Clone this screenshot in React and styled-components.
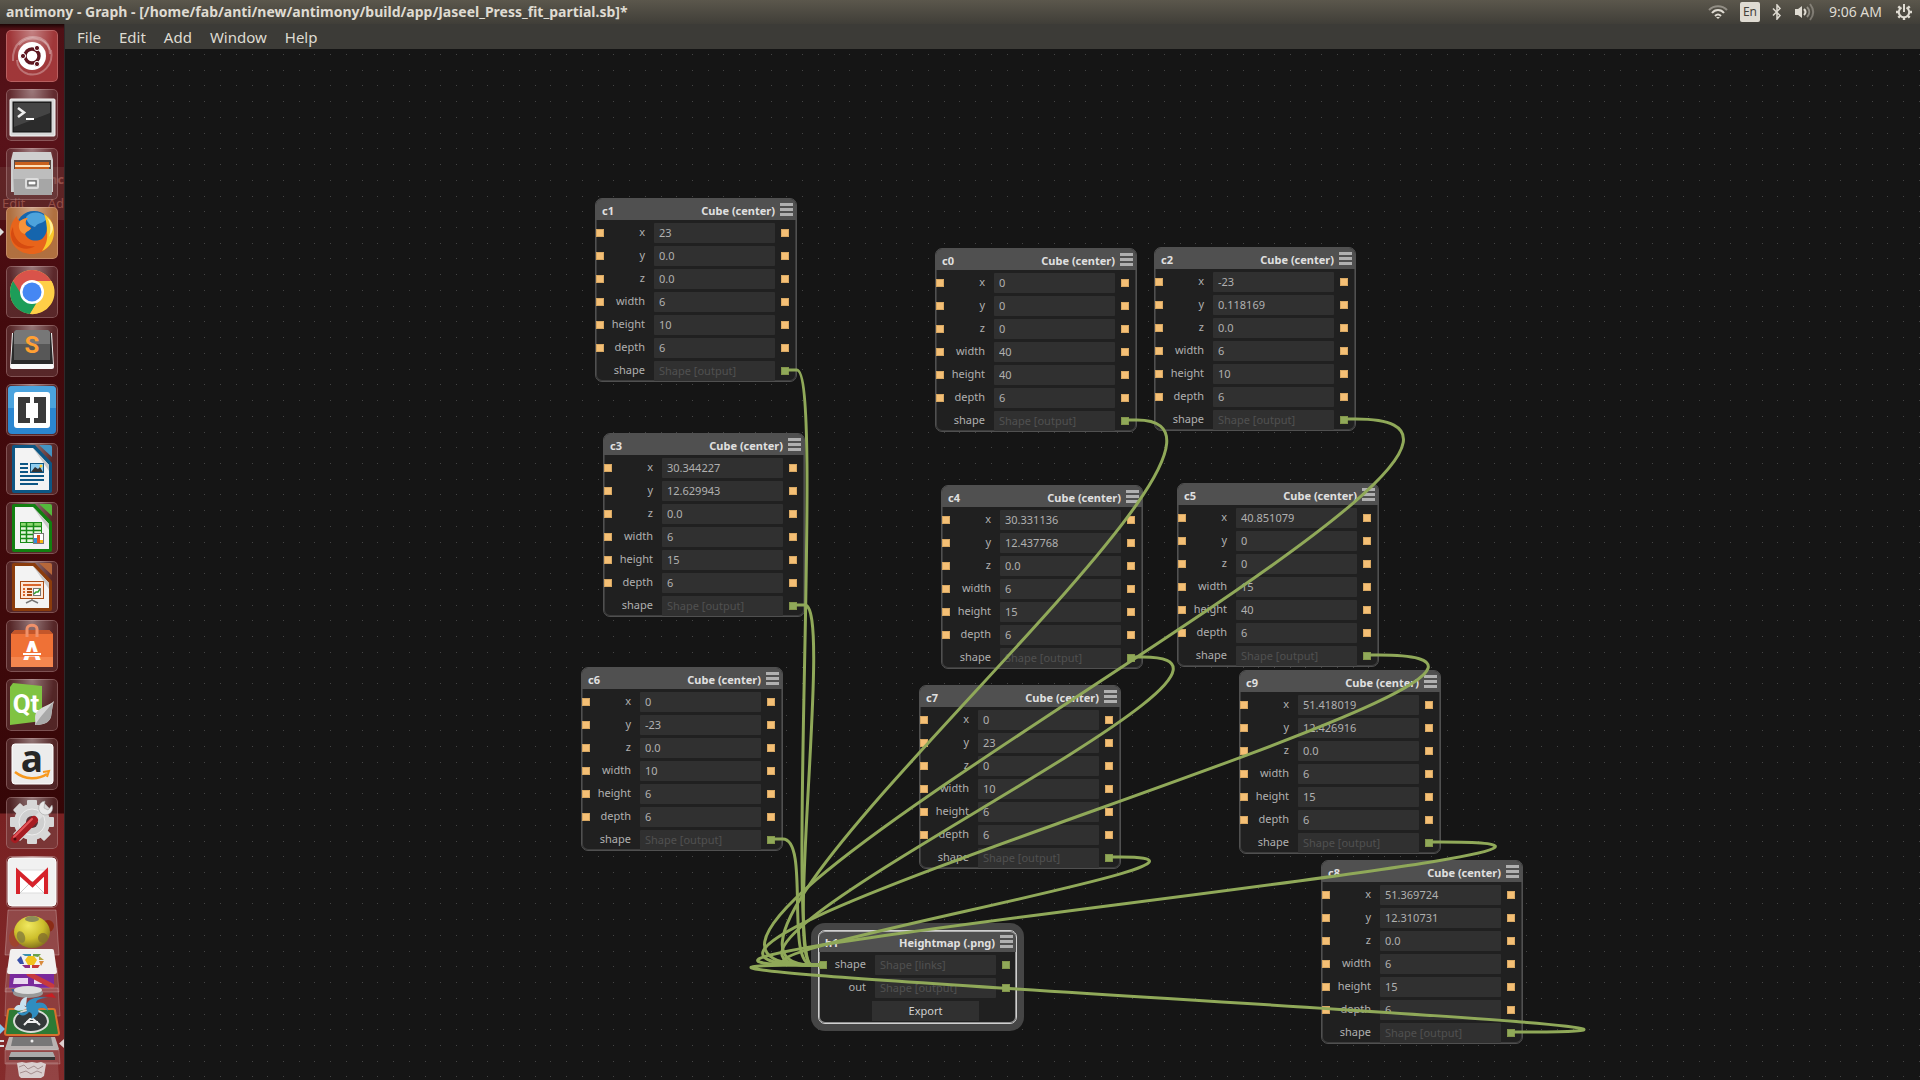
import React from 'react';
import styled, { createGlobalStyle } from 'styled-components';

const UI_FONT = '"Noto Sans", "Open Sans", sans-serif';

const GlobalStyle = createGlobalStyle`
  * {
    box-sizing: border-box;
  }

  body {
    margin: 0;
    background: #151515;
    font-family: ${UI_FONT};
  }

  button,
  input {
    font-family: inherit;
  }
`;

const Desktop = styled.div`
  display: flex;
  flex-direction: column;
  height: 100vh;
  overflow: hidden;
`;

const TopPanel = styled.header`
  display: flex;
  align-items: center;
  justify-content: space-between;
  flex: none;
  height: 24px;
  padding: 0 8px 0 6px;
  background: linear-gradient(#5b574c, #403e38);
  color: #dfdbd2;
`;

const WindowTitle = styled.h1`
  margin: 0;
  font-size: 14px;
  line-height: 20px;
  font-weight: 700;
  white-space: nowrap;
`;

const Tray = styled.div`
  display: flex;
  align-items: center;
  gap: 12px;
`;

const TrayButton = styled.button`
  display: flex;
  align-items: center;
  padding: 0;
  border: 0;
  background: none;
  color: #dfdbd2;
`;

const Keyboard = styled(TrayButton)`
  justify-content: center;
  width: 20px;
  height: 20px;
  border-radius: 2px;
  background: #dfdbd2;
  color: #45423b;
  font-size: 12px;
  line-height: 20px;
`;

const Clock = styled.time`
  margin: 0 2px;
  font-size: 14px;
  line-height: 20px;
  white-space: nowrap;
`;

const Workspace = styled.div`
  display: flex;
  flex: 1;
  min-height: 0;
`;

const Launcher = styled.nav`
  position: relative;
  flex: none;
  width: 65px;
  overflow: hidden;
  border-right: 1px solid #30282a;
  background: linear-gradient(
    #1c0505 0px,
    #4e1015 5px,
    #581219 120px,
    #430a0d 300px,
    #3f090b 600px,
    #350607 789px,
    #782122 790px,
    #842b2b 100%
  );
`;

/* faint remains of a window behind the translucent launcher */
const Ghost = styled.div`
  position: absolute;
  top: 143px;
  left: 0;
  display: flex;
  flex-direction: column;
  width: 64px;
  height: 53px;
  background: rgba(130, 95, 85, 0.25);
  color: rgba(235, 150, 130, 0.4);
  font-size: 13px;
  line-height: 24px;
`;

const GhostRow = styled.span`
  display: flex;
  justify-content: ${({ $end }) => ($end ? 'flex-end' : 'space-between')};
  padding-left: 2px;
  font-weight: ${({ $end }) => ($end ? 700 : 400)};
`;

const IconList = styled.div`
  position: relative;
  display: flex;
  flex-direction: column;
  gap: 7px;
  padding: 6px 6px 0;
`;

const Tile = styled.button`
  display: block;
  width: 52px;
  height: 52px;
  padding: 0;
  border: 0;
  border-radius: 5px;
  box-shadow: inset 0 0 0 1px rgba(255, 220, 220, 0.25);
  background: radial-gradient(ellipse at 50% 0, rgba(255, 255, 255, 0.4), rgba(255, 255, 255, 0.04) 60%),
    ${({ $tint }) => $tint || 'rgba(110, 70, 70, 0.35)'};

  svg {
    display: block;
    overflow: visible;
  }
`;

const Stack = styled.svg`
  position: relative;
  display: block;
`;

const RunningMark = styled.span`
  position: absolute;
  left: 0;
  top: 204px;
  border: 4px solid transparent;
  border-left-color: #ddd;
  border-right-width: 0;
`;

const Main = styled.main`
  display: flex;
  flex: 1;
  flex-direction: column;
  min-width: 0;
`;

const MenuBar = styled.div`
  display: flex;
  align-items: center;
  gap: 18px;
  flex: none;
  height: 25px;
  padding-left: 12px;
  background: #3c3b37;
`;

const MenuItem = styled.button`
  padding: 0;
  border: 0;
  background: none;
  color: #dfdbd2;
  font-size: 15px;
  line-height: 20px;
`;

const Canvas = styled.section`
  position: relative;
  flex: 1;
  overflow: hidden;
  background: #151515;
`;

const Layer = styled.svg`
  position: absolute;
  inset: 0;
  width: 100%;
  height: 100%;
  pointer-events: none;
`;

const NodeBox = styled.article`
  position: absolute;
  width: ${({ $selected }) => ($selected ? 199 : 202)}px;
  padding-bottom: ${({ $selected }) => ($selected ? 2 : 0)}px;
  border: 1px solid ${({ $selected }) => ($selected ? '#d0d0d0' : '#505050')};
  border-radius: 7px;
  background: #202020;
  box-shadow: ${({ $selected }) =>
    $selected
      ? 'inset 0 0 0 1px #909090, 0 0 0 7px #454545'
      : 'inset 0 0 0 1px #3c3c3c'};
`;

const NodeHeader = styled.header`
  display: flex;
  align-items: center;
  height: 21px;
  padding: 0 3px 0 6px;
  border-radius: 6px 6px 0 0;
  background: #505050;
  box-shadow: ${({ $selected }) => ($selected ? 'inset 0 1px 0 #b0b0b0' : 'none')};
  color: #e0e0e0;
  font-size: 11px;
  line-height: 16px;
  font-weight: 700;
`;

const NodeName = styled.span`
  padding-top: 2px;
`;

const NodeTitle = styled.span`
  margin-left: auto;
  margin-right: 5px;
  padding-top: 2px;
`;

const NodeMenu = styled.button`
  display: flex;
  flex-direction: column;
  justify-content: space-between;
  width: 13px;
  height: 13px;
  padding: 0;
  border: 0;
  background: none;

  span {
    display: block;
    height: 3px;
    background: #b0b0b0;
  }
`;

const Rows = styled.div`
  display: flex;
  flex-direction: column;
  gap: 3px;
  padding-top: 3px;
`;

const Row = styled.div`
  display: grid;
  grid-template-columns: 8px ${({ $narrow }) => ($narrow ? 48 : 50)}px 121px 14px;
  align-items: center;
`;

const Port = styled.span`
  grid-column: ${({ $side }) => ($side === 'in' ? 1 : 4)};
  justify-self: end;
  width: 8px;
  height: 8px;
  background: ${({ $shape }) => ($shape ? '#90a959' : '#f4bf75')};
  box-shadow: inset 0 0 0 1px rgba(60, 40, 0, 0.15);
`;

const RowLabel = styled.label`
  grid-column: 2;
  padding: 0 9px 2px 0;
  color: #b0b0b0;
  font-size: 11px;
  line-height: 18px;
  text-align: right;
`;

const Field = styled.input`
  grid-column: 3;
  width: 100%;
  height: 20px;
  padding: 0 5px 2px;
  border: 0;
  border-radius: 1px;
  outline: 0;
  background: #303030;
  color: #b0b0b0;
  font-size: 11px;

  &:disabled {
    color: #505050;
  }
`;

const ExportButton = styled.button`
  width: 107px;
  height: 20px;
  margin-left: 53px;
  padding: 0;
  border: 0;
  background: #303030;
  color: #d0d0d0;
  font-size: 11px;
  line-height: 20px;
`;

// zoom factor of the graph view
const SCALE = 0.7865;
const GRID = 20 * SCALE;

const FIELDS = ['x', 'y', 'z', 'width', 'height', 'depth'];

const cubes = [
  { name: 'c1', x: 530, y: 149, values: ['23', '0.0', '0.0', '6', '10', '6'] },
  { name: 'c0', x: 870, y: 199, values: ['0', '0', '0', '40', '40', '6'] },
  { name: 'c2', x: 1089, y: 198, values: ['-23', '0.118169', '0.0', '6', '10', '6'] },
  { name: 'c3', x: 538, y: 384, values: ['30.344227', '12.629943', '0.0', '6', '15', '6'] },
  { name: 'c4', x: 876, y: 436, values: ['30.331136', '12.437768', '0.0', '6', '15', '6'] },
  { name: 'c5', x: 1112, y: 434, values: ['40.851079', '0', '0', '15', '40', '6'] },
  { name: 'c6', x: 516, y: 618, values: ['0', '-23', '0.0', '10', '6', '6'] },
  { name: 'c7', x: 854, y: 636, values: ['0', '23', '0', '10', '6', '6'] },
  { name: 'c9', x: 1174, y: 621, values: ['51.418019', '12.426916', '0.0', '6', '15', '6'] },
  { name: 'c8', x: 1256, y: 811, values: ['51.369724', '12.310731', '0.0', '6', '15', '6'] },
];

const heightmap = { name: 'h1', x: 753, y: 881 };

const wirePath = (node) => {
  const sx = node.x + 190;
  const sy = node.y + 172;
  const ex = heightmap.x + 6;
  const ey = heightmap.y + 35;
  const stub = 15 * SCALE;
  const reach = 50 * SCALE + Math.max(0, (sx - ex) / 2);
  return `M${sx} ${sy}H${sx + stub}C${sx + reach} ${sy} ${ex - reach} ${ey} ${ex - stub} ${ey}H${ex}`;
};

const gridPath = () => {
  const parts = [];
  for (let y = 5; y < 1440; y += GRID) {
    for (let x = 13.5; x < 2560; x += GRID) {
      parts.push(`M${Math.round(x)} ${Math.round(y)}h1v1h-1z`);
    }
  }
  return parts.join('');
};

const GRID_DOTS = gridPath();

const Header = ({ name, title, selected }) => (
  <NodeHeader $selected={selected}>
    <NodeName>{name}</NodeName>
    <NodeTitle>{title}</NodeTitle>
    <NodeMenu aria-label={`${name} menu`}>
      <span />
      <span />
      <span />
    </NodeMenu>
  </NodeHeader>
);

const PortRow = ({ node, label, value, input, shape, disabled, narrow }) => {
  const id = `${node}-${label}`;
  return (
    <Row $narrow={narrow}>
      {input && <Port $side="in" $shape={shape} />}
      <RowLabel htmlFor={id}>{label}</RowLabel>
      <Field id={id} defaultValue={value} disabled={disabled} />
      <Port $side="out" $shape={shape} />
    </Row>
  );
};

const CubeNode = ({ node }) => (
  <NodeBox style={{ left: node.x, top: node.y }}>
    <Header name={node.name} title="Cube (center)" />
    <Rows>
      {FIELDS.map((field, i) => (
        <PortRow key={field} node={node.name} label={field} value={node.values[i]} input />
      ))}
      <PortRow node={node.name} label="shape" value="Shape [output]" shape disabled />
    </Rows>
  </NodeBox>
);

const HeightmapNode = ({ node }) => (
  <NodeBox $selected style={{ left: node.x, top: node.y }}>
    <Header name={node.name} title="Heightmap (.png)" selected />
    <Rows>
      <PortRow node={node.name} label="shape" value="Shape [links]" input shape disabled narrow />
      <PortRow node={node.name} label="out" value="Shape [output]" shape disabled narrow />
      <ExportButton>Export</ExportButton>
    </Rows>
  </NodeBox>
);

/* ---- launcher icons ---- */

const UbuntuIcon = () => (
  <>
    <g fill="none" stroke="#fff" strokeOpacity="0.3" strokeWidth="2">
      <path d="M7 31C6 14 18 4 34 8c7 3 10 9 10 16" />
      <path d="M45 20c3 14-8 27-23 24C15 42 11 36 11 30" />
      <path d="M13 15C22 4 40 8 44 20" />
    </g>
    <circle cx="26" cy="26" r="14" fill="#fff" />
    <circle cx="26" cy="26" r="7" fill="none" stroke="#5e1720" strokeWidth="3.4" />
    <g fill="#5e1720" stroke="#fff" strokeWidth="1">
      <circle cx="17" cy="26" r="2.6" />
      <circle cx="31" cy="18" r="2.6" />
      <circle cx="31" cy="34" r="2.6" />
    </g>
  </>
);

const TerminalIcon = () => (
  <>
    <rect x="4" y="10" width="45" height="37" rx="1" fill="#d8d8d8" stroke="#f4f4f4" />
    <rect x="7" y="13" width="38" height="30" fill="#2b2b2b" stroke="#111" />
    <path d="M8 14h36v10L8 38z" fill="#fff" opacity="0.12" />
    <path d="M12 19l6 4.5-6 4.5" fill="none" stroke="#eee" strokeWidth="2.6" />
    <path d="M20 30h8" stroke="#fff" strokeWidth="2" />
  </>
);

const FilesIcon = () => (
  <>
    <path d="M7 4h38l2 8v32H5V12z" fill="#cfcfcf" />
    <path d="M8 12h37v10H8z" fill="#5b4a44" />
    <path d="M9 14h34v8H9z" fill="#c9601c" />
    <path d="M9 17h35v2H9z" fill="#ffe0b8" />
    <path d="M7 21h39v26H8z" fill="#a6a6a6" />
    <path d="M7 21h39v10H7z" fill="#bdbdbd" />
    <rect x="20" y="31" width="12" height="9" rx="1" fill="#aaa" stroke="#ddd" strokeWidth="2" />
    <rect x="22" y="33" width="8" height="4" fill="#fff" stroke="#555" />
  </>
);

const FirefoxIcon = () => (
  <>
    <circle cx="28" cy="22" r="18" fill="#1565ad" />
    <path d="M20 10c5-6 15-6 21 1-3 6-9 4-12 9-4-1-8-4-9-10z" fill="#4da3dc" />
    <path d="M38 7c7 4 10 11 10 18 0 13-10 22-22 22C13 47 4 38 4 26 4 18 7 13 11 9c0 3 1 4 3 5 3-2 5-3 8-3-3 3-3 5-1 8l4 2c-1 3-5 3-6 6 3 7 11 8 17 5 6-5 7-16 2-25z" fill="#e8641b" />
    <path d="M38 7c7 4 10 11 10 18 0 9-5 16-12 19 4-6 6-12 5-19 0-6-1-13-3-18z" fill="#f9c92c" />
    <path d="M41 11c4 5 4 13 2 19 2-3 4-6 4-9 0-4-2-8-6-10z" fill="#fff09a" />
    <path d="M7 20c0 14 11 21 22 19-8 6-24 2-24-12 0-3 1-5 2-7z" fill="#d64b10" />
    <path d="M14 14c3-2 5-3 8-3-3 3-3 5-1 8l4 2c-1 3-5 3-6 6-5-1-8-7-5-13z" fill="#f6933a" />
  </>
);

const ChromeIcon = () => (
  <>
    <circle cx="26" cy="26" r="22" fill="#ffd04b" />
    <path d="M26 26L7 15A22 22 0 0 0 24 48l10-17z" fill="#1d9d59" />
    <path d="M26 26l-9 5L7 15a22 22 0 0 1 38 0H26z" fill="#d9534a" />
    <path d="M26 15h19.500A22 22 0 0 1 24 48l11-17z" fill="#ffcf47" />
    <circle cx="26" cy="26" r="12" fill="#fff" />
    <circle cx="26" cy="26" r="9.500" fill="#4587f3" />
  </>
);

const SublimeIcon = () => (
  <>
    <path d="M6 8h40l2 34a2 2 0 0 1-2 2H6a2 2 0 0 1-2-2z" fill="#fafafa" />
    <path d="M7 8h38l2 31H5z" fill="#2a2a2a" />
    <path d="M10 5h32l2 2v28H8V7z" fill="#575757" />
    <path d="M10 5h32l2 2v12H8V7z" fill="#777" />
    <text x="26" y="28" textAnchor="middle" fontFamily="Roboto, sans-serif" fontSize="24" fontWeight="700" fill="#ffa033">S</text>
  </>
);

const BracketsIcon = () => (
  <>
    <rect x="2" y="2" width="48" height="48" rx="4" fill="#2b86d0" />
    <path d="M2 6a4 4 0 0 1 4-4h40a4 4 0 0 1 4 4v18H2z" fill="#4ba3de" />
    <rect x="8" y="8" width="36" height="36" rx="3" fill="#fff" />
    <path d="M12 13h12v6h-4v15h4v5H12zM28 13h12v26H28v-5h4V19h-4z" fill="#3a3a3a" />
  </>
);

const DocumentIcon = ({ dark, light, children }) => (
  <>
    <path d="M8 2h21l17 18v28a2 2 0 0 1-2 2H8a2 2 0 0 1-2-2V4a2 2 0 0 1 2-2z" fill={dark} />
    <path d="M9 5h18l16 17v25H9z" fill="#f3f3f3" />
    <path d="M27 5v0l16 17v6z" fill="#c9c9c9" />
    <path d="M33 2h11a2 2 0 0 1 2 2v10z" fill={light} />
    {children}
  </>
);

const WriterIcon = () => (
  <DocumentIcon dark="#0d5684" light="#4393c3">
    <path d="M14 21h8M14 25h8M14 29h8M14 33h24M14 37h24M14 41h18" stroke="#0d5684" strokeWidth="2" />
    <rect x="24.500" y="20.500" width="13" height="9" fill="#8fcdf0" stroke="#0d5684" />
    <path d="M25 29l4-5 3 2 2-2 3 5z" fill="#333" />
    <circle cx="35" cy="23" r="1.500" fill="#ffce3a" />
  </DocumentIcon>
);

const CalcIcon = () => (
  <DocumentIcon dark="#128010" light="#55b83c">
    <rect x="14.500" y="20.500" width="21" height="20" fill="#e4f6dc" stroke="#198a17" />
    <path d="M15 21h20v3H15z" fill="#8cd66f" />
    <path d="M14 24.500h22M14 28.500h22M14 32.500h22M14 36.500h22M20.500 20v21M27.500 20v21" stroke="#198a17" strokeWidth="1.500" />
    <rect x="27.500" y="31.500" width="10" height="10" fill="#fff" stroke="#777" />
    <path d="M28 36h3v5h-3z" fill="#2d8fd8" />
    <path d="M31 33h3v8h-3z" fill="#e2571e" />
    <path d="M34 38h3v3h-3z" fill="#f4b912" />
  </DocumentIcon>
);

const ImpressIcon = () => (
  <DocumentIcon dark="#8b3c0c" light="#b6673a">
    <rect x="14.500" y="20.500" width="23" height="17" fill="#fde7d6" stroke="#a84a12" />
    <path d="M17 24h18" stroke="#d9662b" strokeWidth="2" />
    <path d="M17 28h2M17 31h2M17 34h2" stroke="#d9662b" strokeWidth="2" />
    <path d="M21 28h5M21 31h5M21 34h5" stroke="#a84a12" strokeWidth="2" />
    <rect x="27.500" y="27.500" width="7" height="7" fill="#fff" stroke="#777" />
    <path d="M28 33l2-2 2 0 2-3" fill="none" stroke="#2f9e2c" strokeWidth="1.500" />
    <path d="M26 38v2M20 42l6-3 6 3" fill="none" stroke="#777" strokeWidth="1.500" />
  </DocumentIcon>
);

const SoftwareIcon = () => (
  <>
    <path d="M5 14l4-4h34l4 4v33H5z" fill="#ef7136" />
    <path d="M5 14l4-4h34l4 4z" fill="#c4562a" />
    <path d="M5 37h42v10H5z" fill="#f5864f" />
    <path d="M21 17V9c0-5 10-5 10 0v8" fill="none" stroke="#f0916a" strokeWidth="3" />
    <text x="26" y="40" textAnchor="middle" fontFamily="Roboto, sans-serif" fontSize="25" fontWeight="900" fill="#fff">A</text>
    <path d="M17 34h17" stroke="#ef7136" strokeWidth="4" />
    <path d="M17 34h18" stroke="#fff" strokeWidth="2" />
  </>
);

const QtIcon = () => (
  <>
    <path d="M4 8l3-4 29 3v35L4 46z" fill="#80c342" />
    <text x="20" y="34" textAnchor="middle" fontFamily="Roboto, sans-serif" fontSize="26" fontWeight="700" fill="#fff">Qt</text>
    <path d="M48 22c-4 4-14 6-18 12-2 4 0 8-1 12 8 0 14-2 16-8 1-5 1-10 3-16z" fill="#d8d8d8" />
    <path d="M47 23c-5 7-12 13-18 23 8 0 14-2 16-8z" fill="#a9a9a9" />
  </>
);

const AmazonIcon = () => (
  <>
    <rect x="6" y="6" width="41" height="40" rx="3" fill="#ececec" stroke="#fff" />
    <text x="26" y="34" textAnchor="middle" fontFamily="Open Sans, sans-serif" fontSize="37" fontWeight="700" fill="#262626">a</text>
    <path d="M9 34c10 8 23 8 32 2" fill="none" stroke="#f7981d" strokeWidth="2.500" />
    <path d="M37 34l6-1-2 6" fill="none" stroke="#f7981d" strokeWidth="2" />
  </>
);

const SettingsIcon = () => (
  <>
    <g fill="#d7d7d7">
      <circle cx="26" cy="25" r="18" />
      {[0, 45, 90, 135].map((angle) => (
        <rect key={angle} x="21" y="3" width="10" height="44" rx="1" transform={`rotate(${angle} 26 25)`} />
      ))}
    </g>
    <circle cx="26" cy="25" r="13" fill="#cfcfcf" stroke="#ececec" strokeWidth="1" />
    <circle cx="26" cy="25" r="6" fill="#5a3035" />
    <path d="M28 24l10-10" stroke="#ddd" strokeWidth="6" />
    <path d="M46 8a7 7 0 1 1-7-4l-1 7 4 2z" fill="#e8e8e8" stroke="#999" strokeWidth="0.500" />
    <path d="M9 42l19-19" stroke="#a71c22" strokeWidth="8" strokeLinecap="round" />
    <path d="M8 40l18-18" stroke="#e4565a" strokeWidth="2" strokeLinecap="round" />
    <circle cx="9" cy="42" r="1.500" fill="#510b0e" />
  </>
);

const GmailIcon = () => (
  <>
    <rect x="2" y="2" width="48" height="48" rx="4" fill="#f1f1f1" stroke="#fff" />
    <rect x="11" y="14" width="31" height="23" fill="#fff" stroke="#ddd" />
    <path d="M14 37l12-12 12 12" fill="none" stroke="#ccc" />
    <path d="M12 38V16l14.500 13L40 16v22" fill="none" stroke="#d6232b" strokeWidth="4" />
  </>
);

const launcherItems = [
  { label: 'Search your computer', Icon: UbuntuIcon, tint: '#9c2f31' },
  { label: 'Terminal', Icon: TerminalIcon },
  { label: 'Files', Icon: FilesIcon },
  { label: 'Firefox', Icon: FirefoxIcon, tint: '#ad6a38' },
  { label: 'Chrome', Icon: ChromeIcon },
  { label: 'Sublime Text', Icon: SublimeIcon },
  { label: 'Brackets', Icon: BracketsIcon },
  { label: 'Writer', Icon: WriterIcon },
  { label: 'Calc', Icon: CalcIcon },
  { label: 'Impress', Icon: ImpressIcon },
  { label: 'Software Center', Icon: SoftwareIcon },
  { label: 'Qt Creator', Icon: QtIcon },
  { label: 'Amazon', Icon: AmazonIcon },
  { label: 'System Settings', Icon: SettingsIcon },
  { label: 'Gmail', Icon: GmailIcon },
];

// the lower icons fold over each other at the bottom of the launcher
const FoldedIcons = () => (
  <Stack width="64" height="172" viewBox="0 0 64 172" aria-hidden="true">
    <defs>
      <radialGradient id="ball" cx="0.4" cy="0.3" r="0.7">
        <stop offset="0" stopColor="#f0e860" />
        <stop offset="0.6" stopColor="#cdbf2c" />
        <stop offset="1" stopColor="#8b7a1c" />
      </radialGradient>
    </defs>
    <path d="M8 2h48l3 45H5z" fill="#fff" fillOpacity="0.16" stroke="#fff" strokeOpacity="0.25" />
    <ellipse cx="15" cy="30" rx="6" ry="9" fill="#a8401c" opacity="0.6" />
    <ellipse cx="48" cy="18" rx="6" ry="6" fill="#8b2c16" />
    <ellipse cx="32" cy="24" rx="18" ry="16" fill="url(#ball)" />
    <ellipse cx="32" cy="11" rx="7" ry="3" fill="#8d8c58" />
    <ellipse cx="21" cy="29" rx="4" ry="6" fill="#847d3c" opacity="0.8" transform="rotate(-20 21 29)" />
    <ellipse cx="43" cy="30" rx="5" ry="5" fill="#85702c" opacity="0.8" />

    <path d="M7 60h50l2 24H5z" fill="#fff" fillOpacity="0.14" stroke="#fff" strokeOpacity="0.2" />
    <path d="M10 64h44v16H9z" fill="#7a2a9c" />
    <path d="M14 70h14v6H13zM34 70h8v6h-8z" fill="#e9d8f0" />
    <path d="M29 66l23 12" stroke="#c63a3e" strokeWidth="5" strokeLinecap="round" />
    <path d="M10 43q0-2 2-2h40q2 0 2 2l3 21q0 2-2 2H9q-2 0-2-2z" fill="#f2f0ef" />
    <path d="M28 48h6l3 4-3 5h-6l-3-5z" fill="#f2c21d" />
    <path d="M22 46h9v2h-6z" fill="#3c8fae" />
    <path d="M33 46h8l-3 3-5-1z" fill="#6aa04a" />
    <path d="M39 48l5 4h-5z" fill="#b4a83d" />
    <path d="M17 52l4-4 2 5 1 3h-4z" fill="#3950a8" />
    <path d="M22 57h8v3h-5z" fill="#8e2d83" />
    <path d="M32 57h6l2 0-2 3h-6z" fill="#c93a38" />
    <path d="M39 53h5l-3 5z" fill="#d98b3d" />

    <path d="M6 80h52l2 28H5z" fill="#fff" fillOpacity="0.1" stroke="#fff" strokeOpacity="0.2" />
    <path d="M11 81h8v5h-5z" fill="#3f5f96" />
    <ellipse cx="28" cy="85" rx="15" ry="5" fill="#999" />
    <ellipse cx="28" cy="82" rx="14" ry="4" fill="#dedede" />
    <path d="M44 88l8-3 4 5z" fill="#c91d22" />

    <path d="M8 103q0-2 2-2h43q2 0 2 2l4 22q0 2-2 2H7q-2 0-2-2z" fill="#2d7a35" stroke="#d8722e" strokeWidth="2" />
    <ellipse cx="31" cy="113" rx="17" ry="11" fill="#34393a" stroke="#d8dcd8" strokeWidth="2" />
    <path d="M24 117l6-6h3l7 6M26 114h12" fill="none" stroke="#eee" strokeWidth="2" />
    <path d="M27 103C23 95 31 87 48 90c-8 0-12 2-12 5 6-2 12 1 12 8-3-4-7-4-10-2 2 4-1 8-7 10 2-4 1-6-2-7-4 5-9 4-12 0 5 1 8 1 10-1z" fill="#2f8dc0" />
    <path d="M14 101c2-5 8-6 13-1-4 3-9 4-13 1zM20 97c0-4 3-8 7-8l-1 9z" fill="#c9e2f0" />

    <path d="M9 129h46l4 12q0 1-2 1H7q-2 0-2-1z" fill="#b9b3b1" />
    <path d="M13 129h38l2 9H11z" fill="#777" />
    <circle cx="32" cy="133" r="1.500" fill="#eee" />
    <path d="M5 142h54l1 14H5z" fill="#fff" fillOpacity="0.14" stroke="#fff" strokeOpacity="0.2" />
    <path d="M11 144h42l2 5H9z" fill="#aaa" />
    <path d="M9 149h46v3H9z" fill="#333" />
    <path d="M6 154h52l1 18H5z" fill="#fff" fillOpacity="0.12" />
    <path d="M17 155l5-1 4 1 6-1 5 1 4-1 5 2-2 12-3 2H21l-2-2z" fill="#d9cfcf" />
    <path d="M19 159l5-2 4 4 6-3 4 3 5-3M20 165l6-2 5 3 6-3 5 2" fill="none" stroke="#a58f8f" />

    <path d="M0 116l5 5-5 5z" fill="#7fc4ee" />
    <path d="M0 132h4v2H0zM0 137h4v2H0z" fill="#ddd" />
    <path d="M64 131v9l-5-4.500z" fill="#e0cfcf" />
  </Stack>
);

const WifiIcon = () => (
  <svg width="20" height="16" viewBox="0 0 20 16" fill="none" stroke="currentColor" strokeWidth="2">
    <path d="M1 6c5-5 13-5 18 0" opacity="0.45" />
    <path d="M4 9c3-4 9-4 12 0" />
    <path d="M7 12c2-2 4-2 6 0" />
    <path d="M8 13h4l-2 2z" fill="currentColor" stroke="none" />
  </svg>
);

const BluetoothIcon = () => (
  <svg width="10" height="16" viewBox="0 0 10 16" fill="none" stroke="currentColor" strokeWidth="1.500">
    <path d="M1 4.500l7 7L5 15V1l3 3.500-7 7" />
  </svg>
);

const VolumeIcon = () => (
  <svg width="21" height="18" viewBox="0 0 21 18" fill="none" stroke="currentColor" strokeWidth="2">
    <path d="M1 6h3l4-3v12l-4-3H1z" fill="currentColor" stroke="none" />
    <path d="M10 6c2 2 2 4 0 6" />
    <path d="M13 4c3 3 3 7 0 10" opacity="0.45" />
    <path d="M16 1c4 5 4 11 0 16" opacity="0.35" />
  </svg>
);

const SessionIcon = () => (
  <svg width="16" height="16" viewBox="0 0 16 16" fill="none" stroke="currentColor" strokeWidth="2">
    <path d="M5.500 3.500a5.200 5.200 0 1 0 5 0" />
    <path d="M8 0v8" />
    <path d="M0 8h2M14 8h2M8 14v2M2.300 2.300l1.700 1.700M13.700 2.300L12 4M2.300 13.700L4 12M13.700 13.700L12 12" strokeWidth="2.400" />
  </svg>
);

const App = () => (
  <Desktop>
    <GlobalStyle />
    <TopPanel>
      <WindowTitle>
        antimony - Graph - [/home/fab/anti/new/antimony/build/app/Jaseel_Press_fit_partial.sb]*
      </WindowTitle>
      <Tray>
        <TrayButton aria-label="Network"><WifiIcon /></TrayButton>
        <Keyboard>En</Keyboard>
        <TrayButton aria-label="Bluetooth"><BluetoothIcon /></TrayButton>
        <TrayButton aria-label="Volume"><VolumeIcon /></TrayButton>
        <Clock>9:06 AM</Clock>
        <TrayButton aria-label="Session"><SessionIcon /></TrayButton>
      </Tray>
    </TopPanel>
    <Workspace>
      <Launcher>
        <Ghost aria-hidden="true">
          <GhostRow $end>nc</GhostRow>
          <GhostRow>
            <span>Edit</span>
            <span>Ad</span>
          </GhostRow>
        </Ghost>
        <IconList>
          {launcherItems.map(({ label, Icon, tint }) => (
            <Tile key={label} aria-label={label} $tint={tint}>
              <svg width="52" height="52" viewBox="0 0 52 52">
                <Icon />
              </svg>
            </Tile>
          ))}
        </IconList>
        <FoldedIcons />
        <RunningMark />
      </Launcher>
      <Main>
        <MenuBar>
          {['File', 'Edit', 'Add', 'Window', 'Help'].map((item) => (
            <MenuItem key={item}>{item}</MenuItem>
          ))}
        </MenuBar>
        <Canvas>
          <Layer>
            <path d={GRID_DOTS} fill="#444" />
          </Layer>
          {cubes.map((node) => (
            <CubeNode key={node.name} node={node} />
          ))}
          <HeightmapNode node={heightmap} />
          <Layer>
            {cubes.map((node) => (
              <path key={node.name} d={wirePath(node)} fill="none" stroke="#90a959" strokeWidth="3" />
            ))}
          </Layer>
        </Canvas>
      </Main>
    </Workspace>
  </Desktop>
);

export default App;
